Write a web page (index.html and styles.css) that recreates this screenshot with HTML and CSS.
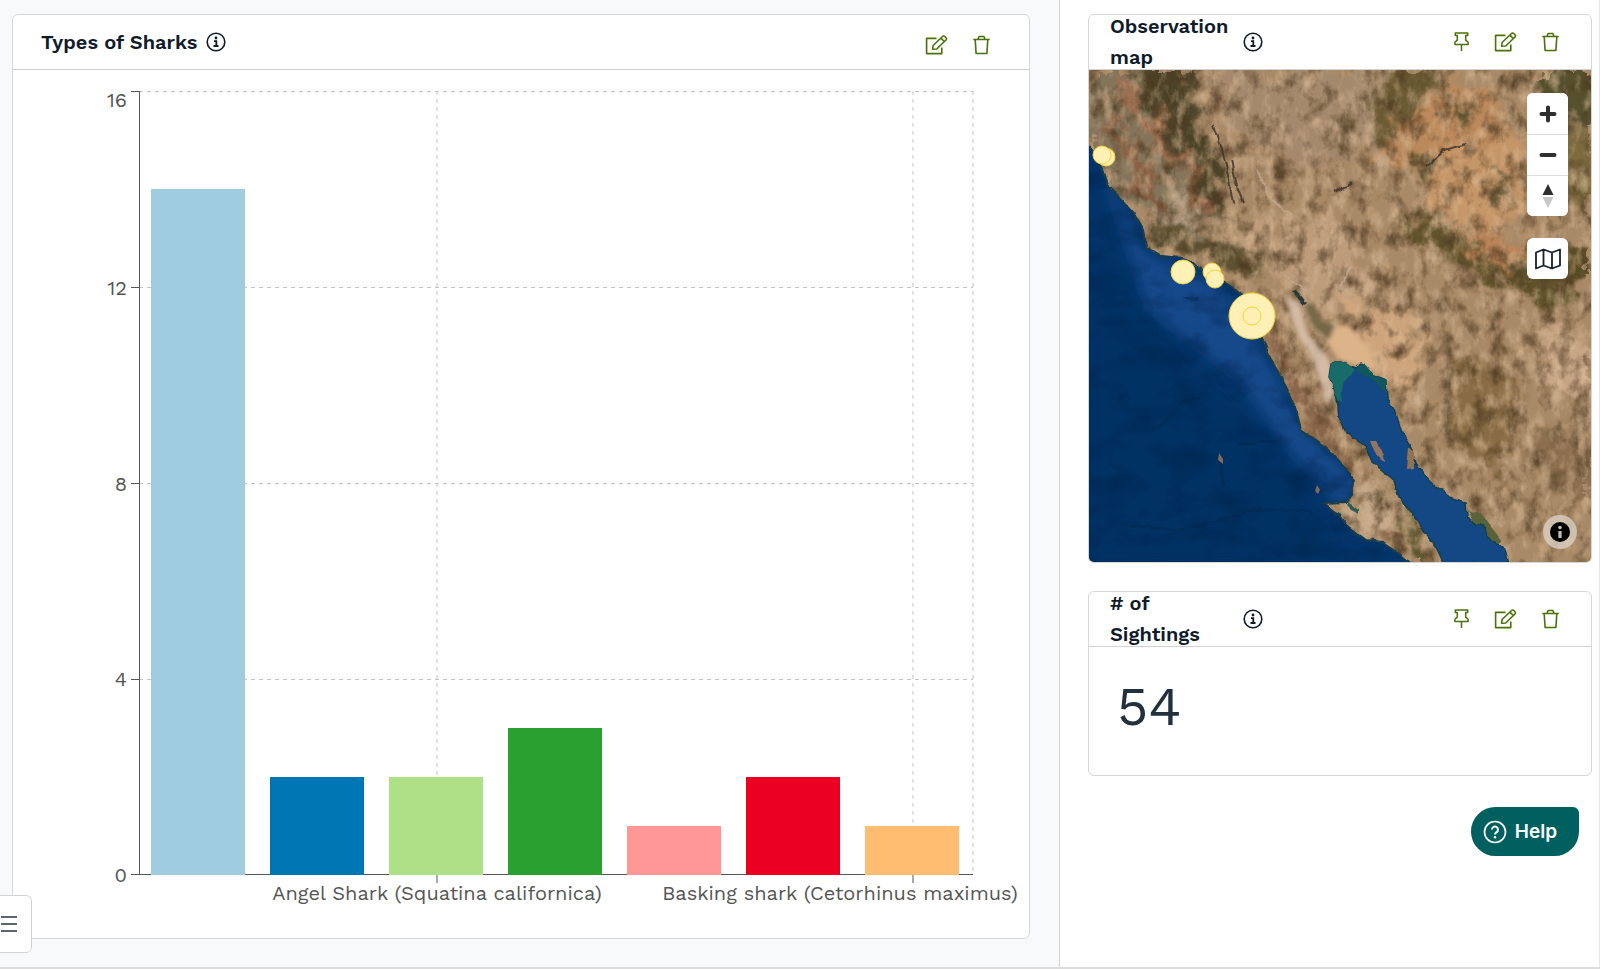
FILE: index.html
```html
<!DOCTYPE html>
<html lang="en">
<head>
    <meta charset="utf-8">
    <title>Shark Sightings Dashboard</title>
    <meta name="viewport" content="width=device-width, initial-scale=1">
    <link rel="stylesheet" href="styles.css">
</head>
<body>
    <!-- Shared icons -->
    <svg class="sprite" aria-hidden="true">
        <symbol id="i-info" viewBox="0 0 20 20">
            <circle cx="10" cy="10" r="8.8" fill="none" stroke="currentColor" stroke-width="1.6"/>
            <circle cx="10" cy="6" r="1.4" fill="currentColor"/>
            <path d="M8 9.100h2.300v4.800M7.500 14h5" fill="none" stroke="currentColor" stroke-width="1.800"/>
        </symbol>
        <symbol id="i-edit" viewBox="0 0 23 20">
            <path d="M11.5 3.4H1.6v15.2h15.2v-6.2" fill="none" stroke="currentColor" stroke-width="1.6" stroke-linejoin="round"/>
            <path d="M7.6 14.3l.5-3.8 9.4-9a1.6 1.6 0 0 1 2.3 0l1.2 1.2a1.6 1.6 0 0 1 0 2.3l-9.3 9zM15.9 3.1l3.5 3.5" fill="none" stroke="currentColor" stroke-width="1.6" stroke-linejoin="round"/>
        </symbol>
        <symbol id="i-trash" viewBox="0 0 17 20">
            <path d="M.3 4.5h16.4M2.2 4.7l.9 13.8h10.8l.9-13.8M5 4.3l1.1-2.8h4.8L12 4.3" fill="none" stroke="currentColor" stroke-width="1.6" stroke-linejoin="round"/>
        </symbol>
        <symbol id="i-pin" viewBox="0 0 15 20">
            <path d="M1.3 1h12.4v2.6h-2v4.5l2.4 2.2v2.2H.9v-2.2l2.4-2.2V3.6h-2zM7.5 12.6V19" fill="none" stroke="currentColor" stroke-width="1.5" stroke-linejoin="round"/>
        </symbol>
    </svg>

    <div class="dashboard">
        <main class="main-panel">
            <section class="card">
                <header class="card-header">
                    <h2 class="card-title">Types of Sharks</h2>
                    <button class="icon-btn info" type="button" aria-label="Info"><svg width="20" height="20"><use href="#i-info"/></svg></button>
                    <div class="actions actions-low">
                        <button class="icon-btn" type="button" aria-label="Edit"><svg width="23" height="20"><use href="#i-edit"/></svg></button>
                        <button class="icon-btn" type="button" aria-label="Delete"><svg width="17" height="20"><use href="#i-trash"/></svg></button>
                    </div>
                </header>
                <svg class="chart" viewBox="0 0 1016 868" role="img" aria-label="Types of Sharks">
                    <g class="grid">
                        <path d="M126 21.5H960M126 217.5H960M126 413.5H960M126 609.5H960"/>
                        <path d="M424 21V805M900 21V805M960 21V805"/>
                    </g>
                    <g class="axis">
                        <path d="M126.5 21V805M118 21.5h8M118 217.5h8M118 413.5h8M118 609.5h8"/>
                        <path d="M118 804.5H960M424 805v8M900 805v8"/>
                    </g>
                    <g>
                        <rect x="138" y="119" width="94" height="686" fill="#a0cce0"/>
                        <rect x="257" y="707" width="94" height="98" fill="#0077b4"/>
                        <rect x="376" y="707" width="94" height="98" fill="#aee088"/>
                        <rect x="495" y="658" width="94" height="147" fill="#29a030"/>
                        <rect x="614" y="756" width="94" height="49" fill="#ff9797"/>
                        <rect x="733" y="707" width="94" height="98" fill="#ec0022"/>
                        <rect x="852" y="756" width="94" height="49" fill="#ffbd71"/>
                    </g>
                    <g class="label label-y">
                        <text x="114" y="37">16</text>
                        <text x="114" y="225">12</text>
                        <text x="114" y="421">8</text>
                        <text x="114" y="616">4</text>
                        <text x="114" y="812">0</text>
                    </g>
                    <g class="label label-x">
                        <text x="424" y="830">Angel Shark (Squatina californica)</text>
                        <text x="827" y="830">Basking shark (Cetorhinus maximus)</text>
                    </g>
                </svg>
            </section>
        </main>

        <aside class="side-panel">
            <section class="card">
                <header class="card-header card-header-narrow">
                    <h2 class="card-title">Observation map</h2>
                    <button class="icon-btn info" type="button" aria-label="Info"><svg width="20" height="20"><use href="#i-info"/></svg></button>
                    <div class="actions">
                        <button class="icon-btn" type="button" aria-label="Pin"><svg width="15" height="20"><use href="#i-pin"/></svg></button>
                        <button class="icon-btn" type="button" aria-label="Edit"><svg width="23" height="20"><use href="#i-edit"/></svg></button>
                        <button class="icon-btn" type="button" aria-label="Delete"><svg width="17" height="20"><use href="#i-trash"/></svg></button>
                    </div>
                </header>
                <div class="map">
                    <svg class="map-canvas" viewBox="0 0 502 492" role="img" aria-label="Satellite map of the Pacific coast">
                        <defs>
                            <filter id="soft" x="-30%" y="-30%" width="160%" height="160%"><feGaussianBlur stdDeviation="7"/></filter>
                            <filter id="soft-sm" x="-30%" y="-30%" width="160%" height="160%"><feGaussianBlur stdDeviation="2"/></filter>
                            <filter id="rough" filterUnits="userSpaceOnUse" x="0" y="0" width="502" height="492" color-interpolation-filters="sRGB">
                                <feTurbulence type="fractalNoise" baseFrequency="0.1" numOctaves="2" seed="4"/>
                                <feDisplacementMap in="SourceGraphic" scale="6" xChannelSelector="R" yChannelSelector="G"/>
                            </filter>
                            <filter id="warp" filterUnits="userSpaceOnUse" x="0" y="0" width="502" height="492" color-interpolation-filters="sRGB">
                                <feGaussianBlur in="SourceGraphic" stdDeviation="4" result="b"/>
                                <feTurbulence type="fractalNoise" baseFrequency="0.045" numOctaves="4" seed="9" result="n"/>
                                <feDisplacementMap in="b" in2="n" scale="46" xChannelSelector="R" yChannelSelector="G"/>
                            </filter>
                            <filter id="dark-grain" x="0" y="0" width="100%" height="100%" color-interpolation-filters="sRGB">
                                <feTurbulence type="fractalNoise" baseFrequency="0.06 0.045" numOctaves="5" seed="11"/>
                                <feColorMatrix values="0 0 0 0 .3  0 0 0 0 .22  0 0 0 0 .12  2.6 0 0 0 -1.2"/>
                            </filter>
                            <filter id="light-grain" x="0" y="0" width="100%" height="100%" color-interpolation-filters="sRGB">
                                <feTurbulence type="fractalNoise" baseFrequency="0.08 0.05" numOctaves="5" seed="27"/>
                                <feColorMatrix values="0 0 0 0 .88  0 0 0 0 .76  0 0 0 0 .62  0 2.4 0 0 -1.1"/>
                            </filter>
                            <filter id="sea-grain" x="0" y="0" width="100%" height="100%" color-interpolation-filters="sRGB">
                                <feTurbulence type="fractalNoise" baseFrequency="0.025 0.04" numOctaves="5" seed="8"/>
                                <feColorMatrix values="0 0 0 0 0  0 0 0 0 .14  0 0 0 0 .3  2 0 0 0 -.9"/>
                            </filter>
                            <linearGradient id="sea" x1="0" y1="1" x2="1" y2="0">
                                <stop offset="0" stop-color="#002d5c"/>
                                <stop offset=".5" stop-color="#04366c"/>
                                <stop offset="1" stop-color="#124a88"/>
                            </linearGradient>
                            <clipPath id="ocean-clip"><path d="M0 75L13 97 20 117 33 130 45 143 55 160 57 177 70 185 93 187 107 197 123 205 143 217 167 237 173 268 182 290 192 307 202 327 208 343 212 360 230 372 247 387 265 410 263 425 257 432 235 433 250 445 257 455 277 470 293 472 320 492H0z"/></clipPath>
                        </defs>

                        <!-- land -->
                        <rect width="502" height="492" fill="#a98a68"/>
                        <g filter="url(#warp)">
                            <path d="M-20 -20H40L130 150 90 180 40 130 -20 70z" fill="#84745a"/>
                            <path d="M42 -20H90L128 90 140 150 118 145 100 100 60 45z" fill="#4c4328"/>
                            <path d="M32 5L55 45 95 95 115 145" fill="none" stroke="#a86f50" stroke-width="10"/>
                            <path d="M20 45L45 95 75 140" fill="none" stroke="#8b5d40" stroke-width="12"/>
                            <path d="M60 150L130 165 175 195 150 205 100 185 60 180z" fill="#5d5030"/>
                            <path d="M80 120L108 150 95 155 75 140z" fill="#b5a087"/>
                            <path d="M120 0H320L300 70 210 100 150 60z" fill="#a4896c"/>
                            <path d="M310 -20H345L330 60 300 75 270 60z" fill="#6b5b35"/>
                            <path d="M345 15H400L420 60 350 100 280 90z" fill="#bc8a5c"/>
                            <path d="M330 100L430 60 440 130 400 170 345 140z" fill="#c59668"/>
                            <path d="M430 -20H520V60L470 50z" fill="#56502d"/>
                            <path d="M475 60H520V170L480 130z" fill="#7d6b40"/>
                            <path d="M355 45l20-10 15 12-10 12zM325 90l12-12 14 20-10 16zM400 110l14-6 8 18-12 20z" fill="#5c5030"/>
                            <path d="M310 140L370 165 430 190 520 170V195L470 235 440 225 380 200 320 160z" fill="#5f512a"/>
                            <path d="M370 165L440 175 450 195 400 195z" fill="#bb8459"/>
                            <path d="M130 160L250 150 290 230 230 250 180 190z" fill="#bd9c7c"/>
                            <path d="M250 230L330 250 330 330 300 310 275 290z" fill="#cda47c"/>
                            <path d="M370 280L440 300 410 400 360 380z" fill="#876c45"/>
                            <path d="M450 260L520 270V330L450 320z" fill="#c7a686"/>
                            <path d="M440 360H520V440L450 420z" fill="#8b7050"/>
                            <path d="M175 250L240 350 290 430 320 470 290 470 230 380 180 290z" fill="#886448"/>
                            <path d="M265 420L300 420 310 455 280 465 255 440z" fill="#c5a989"/>
                            <path d="M315 435L350 510H320z" fill="#615b34"/>
                        </g>
                        <rect width="502" height="492" filter="url(#dark-grain)" opacity=".8"/>
                        <rect width="502" height="492" filter="url(#light-grain)" opacity=".6"/>
                        <g filter="url(#soft-sm)">
                            <path d="M195 225L210 232 218 262 240 290 246 322 238 335 228 300 222 285 208 262z" fill="#dcc3af" opacity=".85"/>
                            <path d="M243 257L258 255 277 275 290 300 270 296 250 290 238 272z" fill="#ddb489"/>
                            <path d="M215 235L225 233 232 250 246 256 240 270 226 258z" fill="#746747"/>
                        </g>
                        <g filter="url(#rough)">
                            <path d="M203 221l4-1 11 14-3 2z" fill="#263a35"/>
                            <path d="M379 440l12 4 22 28-6 4-14-10z" fill="#596238"/>
                            <path d="M125 55l8 24 6 26 5 28M142 90l7 30 5 12M338 96l18-16 20-6M245 122l18-9" fill="none" stroke="#3b3025" stroke-width="2" opacity=".8"/>
                            <path d="M168 100l12 26 22 20M195 205l22 15M250 220l12-25" fill="none" stroke="#c5ad95" stroke-width="2" opacity=".7"/>
                        </g>

                        <!-- water -->
                        <g clip-path="url(#ocean-clip)">
                            <rect width="340" height="492" fill="url(#sea)"/>
                            <g filter="url(#soft)">
                                <path d="M10 95L60 185 130 215 180 290 215 360 270 410 255 440 200 380 150 310 60 240z" fill="#15498a"/>
                                <path d="M0 170L60 240 120 320 200 400 250 492H0z" fill="#003264"/>
                            </g>
                            <rect width="340" height="492" filter="url(#sea-grain)" opacity=".7"/>
                            <path d="M62 362l18-14 14-16 24-7M148 374l40-3M40 455l50 6 80-22 55 3M130 390l5 25M95 228l14 1M30 330l8-8" fill="none" stroke="#012548" stroke-width="2" opacity=".5" filter="url(#rough)"/>
                            <path d="M130 383l4 6 0 5-5-4zM228 415l3 5-2 4-3-3z" fill="#7c6a5c"/>
                        </g>
                        <g filter="url(#rough)">
                            <path d="M0 75L13 97 20 117 33 130 45 143 55 160 57 177 70 185 93 187 107 197 123 205 143 217 167 237 173 268 182 290 192 307 202 327 208 343 212 360 230 372 247 387 265 410 263 425 257 432 235 433 250 445 257 455 277 470 293 472 320 492" fill="none" stroke="#173e4a" stroke-width="2"/>
                            <path d="M242 293L257 293 267 297 273 293 283 305 297 310 298 327 307 343 312 360 322 377 327 393 340 410 360 427 377 432 378 447 395 458 402 472 415 477 420 494H355L347 477 332 458 323 443 310 427 305 410 293 400 283 392 277 377 257 362 250 347 247 320 240 307z" fill="#144884" stroke="#12404d" stroke-width="1.5"/>
                            <path d="M242 293L257 293 267 299 255 312 250 334 247 320 240 307z" fill="#176b68"/>
                            <path d="M268 295l8-1 9 12 12 4v13l-13-14-15-6z" fill="#11585d"/>
                            <path d="M281 371l6 0 8 14 1 6-7-4z" fill="#947460"/>
                            <path d="M319 377l6 5 1 16-9 1z" fill="#8e7354"/>
                            <path d="M264 424l-4 9 10 6 0 5-8-4-5-5z" fill="#305d50"/>
                        </g>

                        <!-- sightings -->
                        <g class="sighting">
                            <circle cx="17" cy="87" r="9"/>
                            <circle cx="13" cy="85" r="9"/>
                            <circle cx="94" cy="202" r="12"/>
                            <circle cx="123" cy="202" r="9"/>
                            <circle cx="126" cy="209" r="9"/>
                            <circle cx="163" cy="246" r="23"/>
                            <circle cx="163" cy="246" r="9"/>
                        </g>
                    </svg>

                    <div class="map-controls">
                        <div class="map-group">
                            <button class="map-btn" type="button" aria-label="Zoom in"><svg width="18" height="18"><path d="M9 2.5v13M2.500 9h13" stroke="#2f2f2f" stroke-width="4" stroke-linecap="round"/></svg></button>
                            <button class="map-btn" type="button" aria-label="Zoom out"><svg width="18" height="18"><path d="M2.500 9h13" stroke="#2f2f2f" stroke-width="4" stroke-linecap="round"/></svg></button>
                            <button class="map-btn" type="button" aria-label="Reset bearing"><svg width="12" height="26"><path d="M6 1l5.500 11h-11z" fill="#2f2f2f"/><path d="M6 25l5.500-11h-11z" fill="#c8c8c8"/></svg></button>
                        </div>
                        <div class="map-group">
                            <button class="map-btn" type="button" aria-label="Base layers"><svg width="26" height="22" fill="none" stroke="#14202c" stroke-width="1.8" stroke-linejoin="round"><path d="M1 4.500L8.500 1.500 17 4.500 25 1.500V17.500L17 20.500 8.500 17.500 1 20.500zM8.500 1.500v16M17 4.500v16"/></svg></button>
                        </div>
                    </div>
                    <button class="attribution" type="button" aria-label="Attribution"><svg width="20" height="20"><circle cx="10" cy="10" r="10"/><circle cx="10" cy="5.500" r="1.800" fill="#c9bdac"/><path d="M10 9v7" stroke="#c9bdac" stroke-width="3.200"/></svg></button>
                </div>
            </section>

            <section class="card">
                <header class="card-header card-header-narrow">
                    <h2 class="card-title"># of Sightings</h2>
                    <button class="icon-btn info" type="button" aria-label="Info"><svg width="20" height="20"><use href="#i-info"/></svg></button>
                    <div class="actions">
                        <button class="icon-btn" type="button" aria-label="Pin"><svg width="15" height="20"><use href="#i-pin"/></svg></button>
                        <button class="icon-btn" type="button" aria-label="Edit"><svg width="23" height="20"><use href="#i-edit"/></svg></button>
                        <button class="icon-btn" type="button" aria-label="Delete"><svg width="17" height="20"><use href="#i-trash"/></svg></button>
                    </div>
                </header>
                <p class="big-number">54</p>
            </section>
        </aside>
    </div>

    <button class="menu-btn" type="button" aria-label="Open menu"><svg width="16" height="18"><path d="M0 2h16M0 9h16M0 16h16" stroke="#5f656d" stroke-width="2"/></svg></button>

    <button class="help-btn" type="button">
        <svg width="24" height="24" fill="none" stroke="#fff" stroke-width="1.7"><circle cx="12" cy="12" r="10.500"/><path d="M9 9.600a3 3 0 1 1 4.600 2.500c-1 .7-1.600 1.100-1.600 2.400" stroke-width="2"/><circle cx="12" cy="17.200" r="1.300" fill="#fff" stroke="none"/></svg>
        Help
    </button>
</body>
</html>
```

FILE: styles.css
```css
* { box-sizing: border-box; }
body { margin: 0; font-family: "Work Sans", Inter, sans-serif; color: #0f1b2a; background: #fff; }
button { font-family: inherit; cursor: pointer; }
svg { display: block; }
.sprite { position: absolute; width: 0; height: 0; }

/* Layout */
.dashboard { display: grid; grid-template-columns: 1060fr 540fr; min-height: 100vh; border-bottom: 2px solid #dcdcdc; }
.main-panel { min-width: 0; padding: 14px 29px 28px 12px; background: #f8f9fb; border-right: 1px solid #d0d2d4; }
.side-panel { min-width: 0; display: flex; flex-direction: column; gap: 28px; padding: 14px 7px 28px 28px; border-right: 1px solid #e6e6e6; }

/* Cards */
.card { background: #fff; border: 1px solid #d4d6d8; border-radius: 6px; }
.card-header { display: flex; align-items: center; height: 55px; padding: 0 39px 0 28px; border-bottom: 1px solid #d0d2d4; }
.card-header-narrow { padding: 0 32px 0 21px; }
.card-title { margin: 0; font-size: 20px; line-height: 31px; font-weight: 600; }
.card-header-narrow .card-title { width: 124px; }
.icon-btn { display: flex; padding: 0; border: none; background: none; color: #4a7208; }
.info { margin-left: 9px; color: #0f1b2a; }
.actions { display: flex; gap: 25px; margin-left: auto; }
.actions-low { padding-top: 5px; }

/* Bar chart */
.chart { width: 100%; height: auto; }
.grid { stroke: #c4c4c4; stroke-dasharray: 4 4; fill: none; }
.axis { stroke: #555; fill: none; }
.label { font-size: 20px; fill: #555; }
.label-y { text-anchor: end; }
.label-x { text-anchor: middle; }

/* Map */
.map { position: relative; overflow: hidden; border-radius: 0 0 5px 5px; }
.map-canvas { width: 100%; height: auto; }
.sighting { fill: #fff0b6; stroke: #f8d037; }
.map-controls { position: absolute; top: 23px; right: 23px; display: flex; flex-direction: column; gap: 22px; }
.map-group { background: #fff; border-radius: 6px; overflow: hidden; }
.map-btn { display: flex; align-items: center; justify-content: center; width: 41px; height: 41px; padding: 0; border: none; background: #fff; }
.map-btn + .map-btn { border-top: 1px solid #ddd; }
.attribution { position: absolute; right: 14px; bottom: 13px; display: flex; align-items: center; justify-content: center; width: 34px; height: 34px; padding: 0; border: none; border-radius: 50%; background: rgba(218, 208, 192, 0.8); }

.big-number { margin: 0; padding: 22px 28px 30px; font-size: 54px; line-height: 76px; color: #22303e; }

/* Floating buttons */
.menu-btn { position: fixed; left: -1px; bottom: 16px; display: flex; align-items: center; width: 33px; height: 58px; padding: 0 0 0 1px; background: #fff; border: 1px solid #d0d2d4; border-radius: 0 6px 6px 0; }
.help-btn { position: fixed; right: 21px; bottom: 113px; display: flex; align-items: center; gap: 8px; height: 49px; padding: 0 22px 0 12px; border: none; border-radius: 25px 6px 25px 25px; background: #005f5f; color: #fff; font-family: Inter, sans-serif; font-size: 19px; font-weight: 600; }
```
